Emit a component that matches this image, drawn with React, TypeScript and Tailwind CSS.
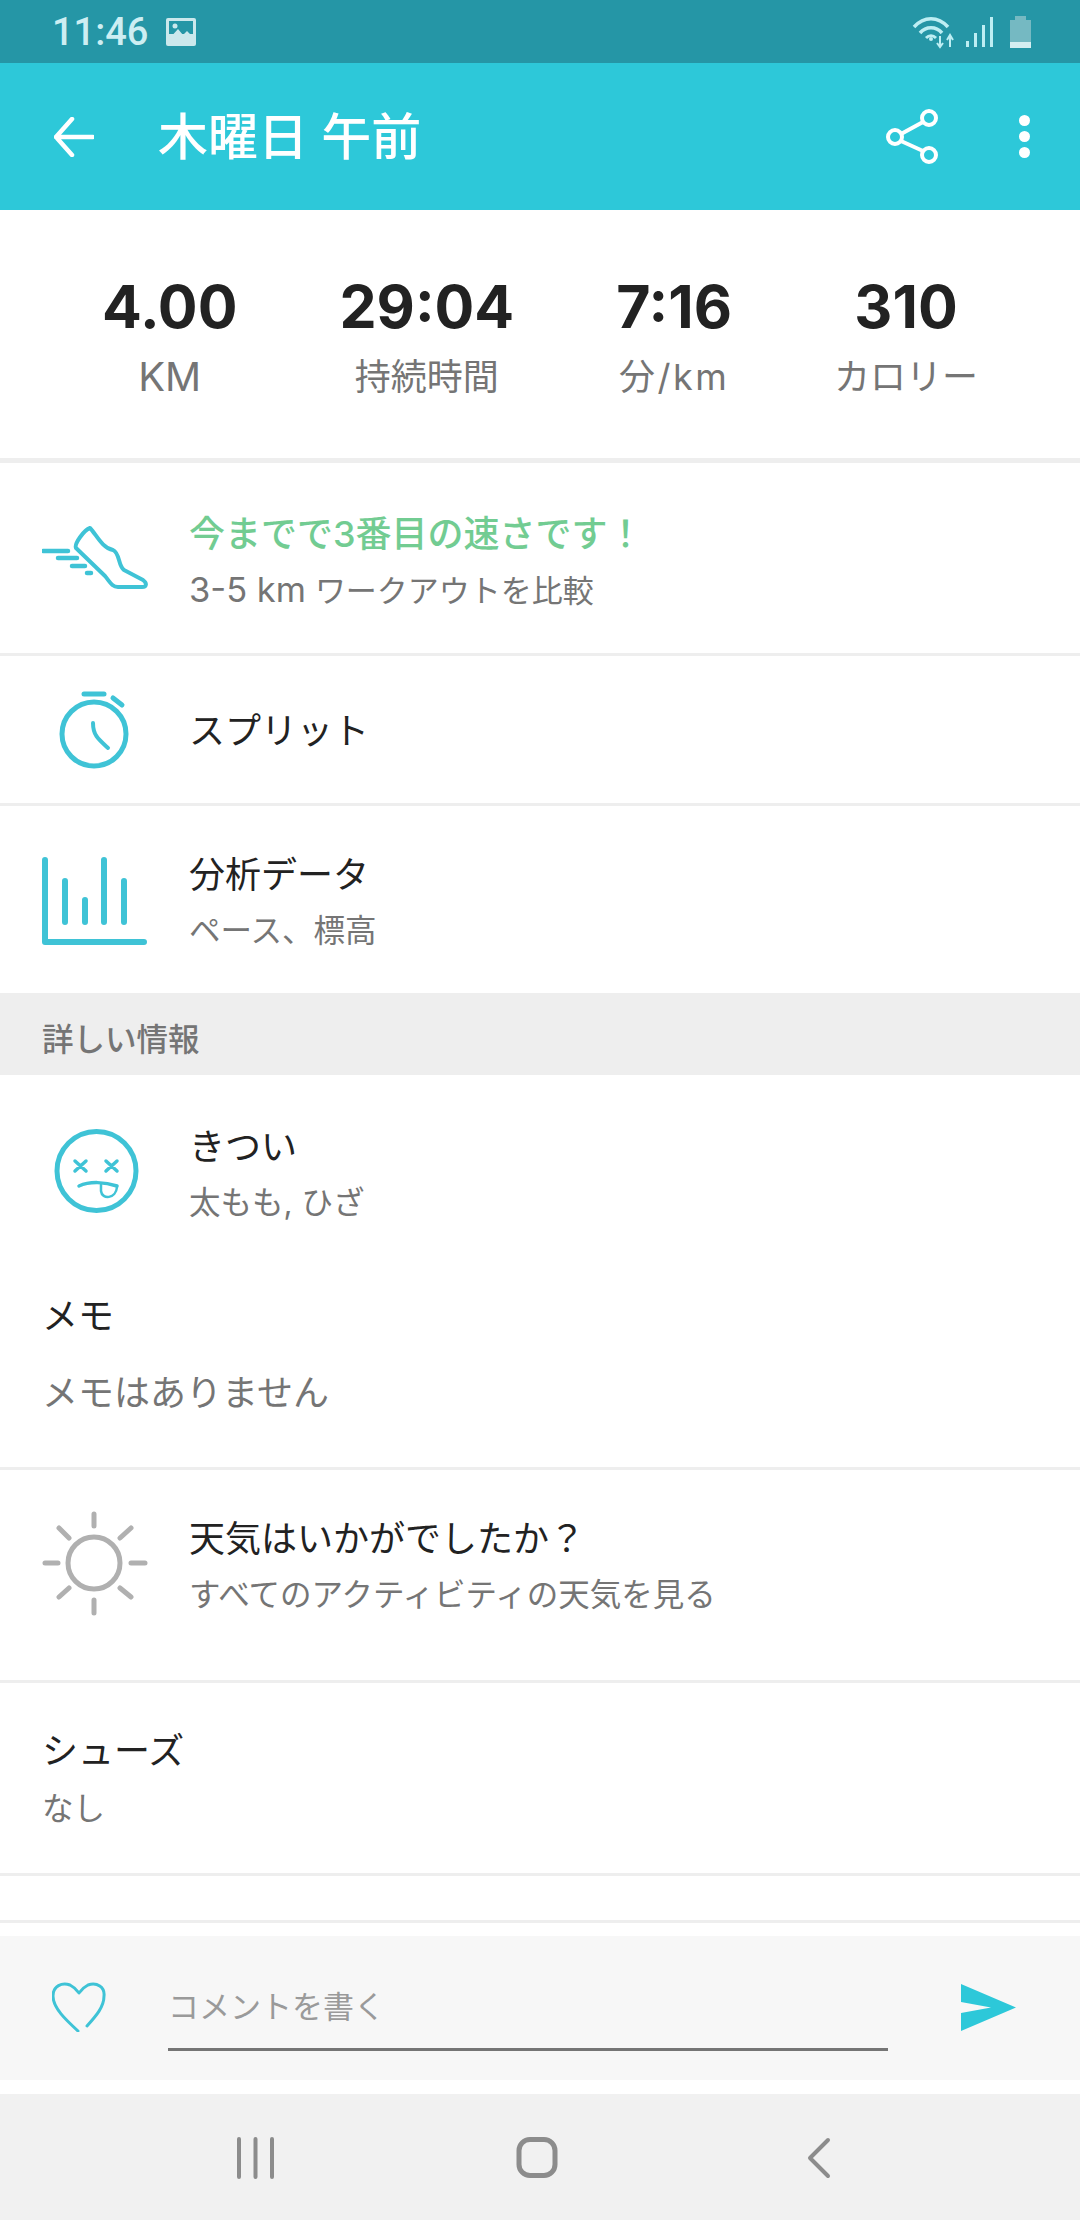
import React from "react";

const jp = "font-['Inter','Noto_Sans_CJK_JP',sans-serif]";

function Icon({ box, children }: { box: string; children: React.ReactNode }) {
  const [, , w, h] = box.split(" ").map(Number);
  return (
    <svg width={w} height={h} viewBox={box} fill="none" className="shrink-0" strokeLinecap="round" strokeLinejoin="round">
      {children}
    </svg>
  );
}

function Stat({ value, label }: { value: string; label: React.ReactNode }) {
  return (
    <div className="flex flex-col items-center">
      <div className="font-['Inter',sans-serif] font-bold text-[59px] leading-[72px] text-[#222222]">{value}</div>
      <div className="text-[36px] leading-[50px] mt-[9px] text-[#757575]">{label}</div>
    </div>
  );
}

function Divider({ h = "h-[3px]" }: { h?: string }) {
  return <div className={`${h} bg-[#eeeeee] shrink-0`} />;
}

function Titles({
  title,
  sub,
  titleClass = "font-normal text-[#222222]",
}: {
  title: string;
  sub?: React.ReactNode;
  titleClass?: string;
}) {
  return (
    <div className="flex flex-col">
      <div className={`text-[36px] leading-[50px] ${titleClass}`}>{title}</div>
      {sub && <div className="text-[31.5px] leading-[46px] mt-[8px] text-[#757575]">{sub}</div>}
    </div>
  );
}

const teal = "#3fc3d6";

export default function App() {
  return (
    <div className={`w-[1080px] h-[2220px] flex flex-col overflow-hidden bg-white ${jp}`}>
      {/* Status bar */}
      <div className="h-[63px] shrink-0 bg-[#2596a6] flex items-center pl-[52px] pr-[48px]">
        <span className="font-['Roboto',sans-serif] font-medium text-[38px] leading-[44px] text-[#cdeef2]">11:46</span>
        <svg width="32" height="30" viewBox="0 0 32 30" className="ml-[17px]">
          <rect x="1" y="1" width="30" height="28" rx="2" fill="#cbe8ec" />
          <rect x="4" y="4" width="24" height="13" fill="#2596a6" />
          <circle cx="10" cy="9" r="2.5" fill="#cbe8ec" />
          <path d="M4 22 L13 12 L18 18 L22 14 L28 20 V26 H4Z" fill="#cbe8ec" />
        </svg>
        <div className="flex-1" />
        <svg width="120" height="40" viewBox="912 12 120 40" fill="none">
          <path d="M914 27 C924 16 938 16 948 27" stroke="#bdeef3" strokeWidth="3.5" />
          <path d="M920 33 C926 26 936 26 942 33" stroke="#bdeef3" strokeWidth="3.5" />
          <path d="M926 38 C929 35 933 35 936 38" stroke="#bdeef3" strokeWidth="3" />
          <circle cx="931" cy="39" r="2" fill="#bdeef3" />
          <path d="M940 36 V46 M937 43 L940 47 L943 43 M950 47 V37 M947 40 L950 35 L953 40" stroke="#bdeef3" strokeWidth="2" />
          <rect x="966" y="41" width="3" height="6" fill="#bdeef3" />
          <rect x="974" y="33" width="3" height="14" fill="#bdeef3" />
          <rect x="982" y="25" width="3" height="22" fill="#bdeef3" />
          <rect x="990" y="17" width="3" height="30" fill="#bdeef3" />
          <path d="M1015 16 H1026 V20 H1031 V42 H1010 V20 H1015Z" fill="#75b9c2" />
          <rect x="1010" y="42" width="21" height="6" fill="#d5eef1" />
        </svg>
      </div>

      {/* App bar */}
      <div className="h-[147px] shrink-0 bg-[#2dc8d9] flex items-center pl-[54px] pr-[50px]">
        <svg width="40" height="40" viewBox="54 117 40 40" fill="none" stroke="#ffffff" strokeWidth="4.5" strokeLinecap="round" strokeLinejoin="round" className="shrink-0">
          <path d="M93 137 H56 M72 119 L56 137 L72 155" />
        </svg>
        <div className="ml-[64px] text-[50px] leading-[60px] font-medium text-white">木曜日 午前</div>
        <div className="flex-1" />
        <svg width="60" height="60" viewBox="882 107 60 60" fill="none" stroke="#ffffff" strokeWidth="4">
          <circle cx="928" cy="118" r="7" />
          <circle cx="894" cy="137" r="7" />
          <circle cx="928" cy="155" r="7" />
          <path d="M922 122 L900 134 M900 141 L922 151" />
        </svg>
        <div className="ml-[76px] flex flex-col gap-[5px]">
          <div className="w-[11px] h-[11px] rounded-full bg-white" />
          <div className="w-[11px] h-[11px] rounded-full bg-white" />
          <div className="w-[11px] h-[11px] rounded-full bg-white" />
        </div>
      </div>

      {/* Stats */}
      <div className="h-[248px] shrink-0 flex justify-evenly items-start pt-[61px]">
        <Stat value="4.00" label={<span className="text-[40px]">KM</span>} />
        <Stat value="29:04" label="持続時間" />
        <Stat value="7:16" label={<span className="tracking-[2.5px]">分/km</span>} />
        <Stat value="310" label="カロリー" />
      </div>
      <Divider h="h-[5px]" />

      {/* Fastest */}
      <div className="h-[190px] shrink-0 flex items-center pl-[42px]">
        <Icon box="42 520 106 76">
          <g stroke={teal} strokeWidth="4">
            <path d="M90 528 C96 534 102 548 113 550 C120 553 118 566 124 570 L143 580 C147 583 147 587 142 587 L118 587 C112 587 110 582 105 576 L76 548 C74 544 84 530 90 528Z" />
            <path d="M43 551 H68 M58 558 H77 M72 566 H85 M87 573 H91" strokeWidth="4.5" />
          </g>
        </Icon>
        <div className="ml-[41px] pt-[6px]">
          <Titles
            title="今までで3番目の速さです！"
            titleClass="font-medium text-[#72cc92]"
            sub={
              <>
                <span className="text-[34.5px]">3-5 km</span> <span className="text-[31px]">ワークアウトを比較</span>
              </>
            }
          />
        </div>
      </div>
      <Divider />

      {/* Splits */}
      <div className="h-[147px] shrink-0 flex items-center pl-[42px]">
        <Icon box="42 686 106 86">
          <g stroke={teal} strokeWidth="5">
            <circle cx="94" cy="733" r="32" />
            <path d="M84 693 H104" />
            <path d="M113 697 L122 704" />
            <path d="M93 722 C93 734 98 738 108 747" strokeWidth="4" />
          </g>
        </Icon>
        <div className="ml-[41px] pt-[3px]">
          <Titles title="スプリット" />
        </div>
      </div>
      <Divider />

      {/* Analysis */}
      <div className="h-[187px] shrink-0 flex items-center pl-[42px]">
        <Icon box="42 854 106 92">
          <g stroke={teal} strokeWidth="6">
            <path d="M45 860 V942 H144" />
            <path d="M65 881 V922 M85 900 V922 M104 860 V922 M124 881 V922" />
          </g>
        </Icon>
        <div className="ml-[41px] pt-[5px]">
          <Titles title="分析データ" sub="ペース、標高" />
        </div>
      </div>

      {/* Section */}
      <div className="h-[82px] shrink-0 bg-[#eeeeee] flex items-center pl-[42px] pt-[12px] text-[31.5px] font-medium text-[#757575]">詳しい情報</div>

      {/* Tiredness */}
      <div className="h-[175px] shrink-0 flex items-center pl-[42px] pt-[22px]">
        <Icon box="42 1124 106 98">
          <g stroke={teal}>
            <circle cx="96.5" cy="1170" r="39.5" strokeWidth="5" />
            <path d="M75 1160 L86 1170 M86 1160 L75 1170 M106 1160 L117 1170 M117 1160 L106 1170" strokeWidth="3.5" />
            <path d="M79 1185 C90 1180 105 1181 117 1185" strokeWidth="3.5" />
            <path d="M101 1184 V1190 C102 1199 116 1198 117 1186" strokeWidth="2.5" />
          </g>
        </Icon>
        <div className="ml-[41px]">
          <Titles title="きつい" sub="太もも, ひざ" />
        </div>
      </div>

      {/* Memo */}
      <div className="h-[217px] shrink-0 pl-[42px] pt-[41px]">
        <div className="text-[36px] leading-[50px] text-[#222222]">メモ</div>
        <div className="text-[36px] leading-[50px] mt-[27px] text-[#757575]">メモはありません</div>
      </div>
      <Divider />

      {/* Weather */}
      <div className="h-[210px] shrink-0 flex items-center pl-[42px] pb-[18px]">
        <Icon box="42 1510 106 114">
          <g stroke="#b0b0b0" strokeWidth="5">
            <circle cx="94" cy="1564" r="26" />
            <path d="M94 1515 V1527 M94 1601 V1614 M45 1564 H58 M131 1564 H145 M59 1529 L69 1539 M131 1529 L120 1539 M59 1598 L69 1589 M131 1598 L120 1589" />
          </g>
        </Icon>
        <div className="ml-[41px]">
          <Titles title="天気はいかがでしたか？" sub="すべてのアクティビティの天気を見る" />
        </div>
      </div>
      <Divider />

      {/* Shoes */}
      <div className="h-[190px] shrink-0 pl-[42px] pt-[43px]">
        <div className="text-[36px] leading-[50px] text-[#222222]">シューズ</div>
        <div className="text-[31.5px] leading-[46px] mt-[10px] text-[#757575]">なし</div>
      </div>
      <Divider />
      <div className="h-[44px] shrink-0" />
      <Divider />
      <div className="h-[13px] shrink-0" />

      {/* Comment bar */}
      <div className="h-[144px] shrink-0 bg-[#f7f7f7] flex items-start pl-[52px] pr-[63px]">
        <svg width="54" height="50" viewBox="52 1982 54 50" fill="none" stroke="#3fc3d6" strokeWidth="3" strokeLinecap="round" strokeLinejoin="round" className="mt-[46px] shrink-0">
          <path d="M78 2031 C66 2020 53 2008 53 1996 C53 1986 62 1982 70 1985 C74 1987 77 1990 79 1993 C81 1990 84 1987 88 1985 C97 1982 105 1987 104 1996 C104 2007 96 2016 87 2026" />
        </svg>
        <div className="ml-[62px] w-[720px] h-[115px] border-b-[3px] border-[#757575] text-[31px] leading-[44px] text-[#9a9a9a] pt-[49px]">コメントを書く</div>
        <div className="flex-1" />
        <svg width="56" height="48" viewBox="962 1984 56 48" className="mt-[48px] shrink-0">
          <path d="M962 1984 L1017 2007.5 L962 2031 V2013 L992 2007.5 L962 2002Z" fill="#2dc8d9" />
        </svg>
      </div>

      <div className="h-[14px] shrink-0" />

      {/* Nav */}
      <div className="flex-1 bg-[#f1f1f1] flex items-center">
        <svg width="1080" height="126" viewBox="0 2094 1080 126" fill="none" stroke="#8c8c8c" strokeLinecap="round" strokeLinejoin="round">
          <path d="M239 2139 V2177 M255.5 2139 V2177 M272 2139 V2177" strokeWidth="4" />
          <rect x="519" y="2139.5" width="36" height="36" rx="11" strokeWidth="5" />
          <path d="M828 2140 L810 2158 L828 2176" strokeWidth="4" />
        </svg>
      </div>
    </div>
  );
}
